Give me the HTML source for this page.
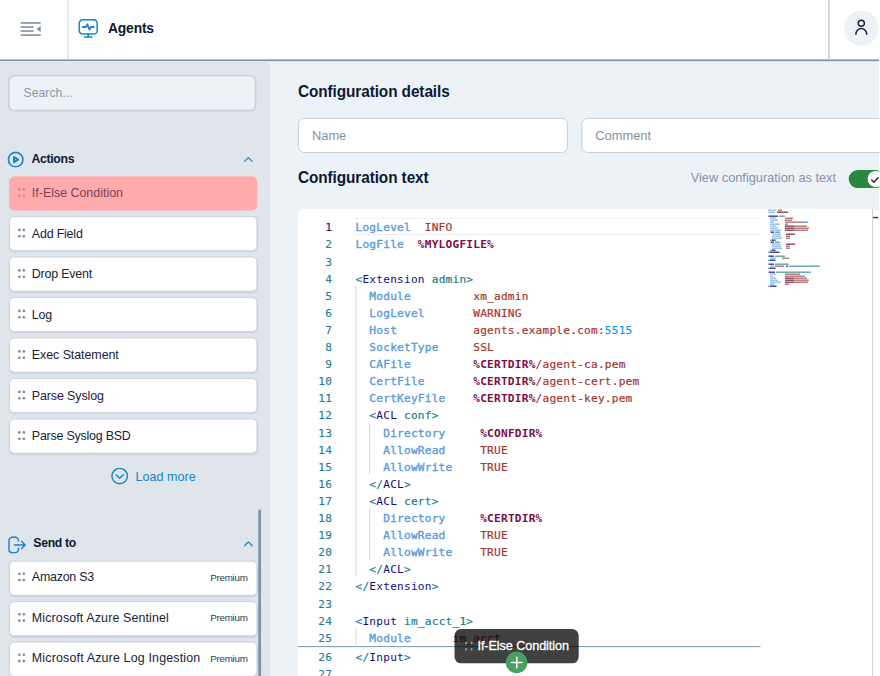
<!DOCTYPE html>
<html lang="en">
<head>
<meta charset="utf-8">
<title>Agents</title>
<style>
html,body{margin:0;padding:0;background:#fff;overflow:hidden;}
body{font-family:"Liberation Sans",Arial,sans-serif;font-size:14px;color:#0b1a33;}
#root{transform:scale(0.9);transform-origin:0 0;position:absolute;left:0;top:0;width:984px;height:752px;overflow:hidden;background:#fff;}
#mainbg{position:absolute;left:300px;top:68px;width:677px;height:690px;background:#edf2f7;}
.abs{position:absolute;}
/* header */
#hdr{position:absolute;left:0;top:0;width:977px;height:66px;background:#fff;border-bottom:2px solid #8193a7;}
#hdr .sep{position:absolute;top:0;width:1.6px;height:66px;background:#c9d1da;}
#title{position:absolute;left:120px;top:23px;font-weight:bold;font-size:15.4px;letter-spacing:-0.2px;color:#0b1a33;line-height:18px;}
#avatar{position:absolute;left:937.700px;top:12.100px;width:38px;height:38.500px;border-radius:50%;background:#edf2f7;}
/* sidebar */
#side{position:absolute;left:0;top:68px;width:300px;height:690px;background:#dfe5eb;}
#search{position:absolute;left:8.800px;top:15.100px;width:272.400px;height:37.100px;border:2px solid #cad2dc;border-radius:7px;background:#edf2f7;}
#search span{position:absolute;left:15.400px;top:11px;font-size:13.600px;color:#8a98a8;line-height:16px;}
.sec{position:absolute;left:0;width:300px;height:20px;}
.sec .t{position:absolute;left:35px;top:1px;font-weight:bold;font-size:13.6px;letter-spacing:-0.35px;line-height:18px;color:#0b1a33;}
.item{position:absolute;left:9.800px;width:274.300px;height:37px;border:1px solid #c9d1db;border-radius:6px;background:#fff;box-shadow:0 1px 1px rgba(120,135,155,.18);}
.item .l{position:absolute;left:24.600px;top:10.100px;font-size:13.800px;line-height:18px;color:#16233a;white-space:nowrap;}
.item .p{position:absolute;right:10px;top:11.500px;font-size:10.900px;letter-spacing:-0.3px;line-height:14px;color:#2b3a50;}
.item i{position:absolute;left:9.700px;top:12.900px;width:10px;height:10px;}
.item i b{position:absolute;width:3px;height:3px;border-radius:50%;background:#7f8c9e;}
.item.s2 .l{top:8.600px;}
.item.s2 .p{top:10px;}
.item.s2 i{top:12px;}
.item.drag{background:#ffabab;border-color:#ffabab;box-shadow:none;height:36px;}
.item.drag .l{top:9px;}
.item.drag i{top:11.700px;}
.item.drag .l{color:#7d4152;}
.item.drag i b{background:#c98a92;}
#ghost i b{position:absolute;width:2.800px;height:2.800px;border-radius:50%;background:#8f9bab;}
/* main */
.h{position:absolute;font-weight:bold;font-size:18.500px;letter-spacing:-0.1px;line-height:22px;transform:scaleX(.922);transform-origin:0 0;color:#0b1a33;white-space:nowrap;}
.inp{position:absolute;height:36.600px;border:1px solid #bfc9d5;border-radius:7px;background:#fff;}
.inp span{position:absolute;left:14.600px;top:10.600px;font-size:14.300px;line-height:16px;color:#8391a4;}
#ed{position:absolute;left:331px;top:232px;width:660px;height:530px;background:#fff;border-radius:7px 0 0 0;overflow:hidden;}
.ln{position:absolute;left:0;width:38px;text-align:right;font-family:"DejaVu Sans Mono","Liberation Mono",monospace;font-size:12.400px;letter-spacing:.235px;line-height:19px;height:19px;color:#237893;-webkit-text-stroke:.1px;}
.ln.cur{color:#0b216f;}
.cl{position:absolute;left:64px;font-family:"DejaVu Sans Mono","Liberation Mono",monospace;font-size:12.400px;letter-spacing:.235px;line-height:19px;height:19px;white-space:pre;color:#000;-webkit-text-stroke:.22px;}
.ck{color:#5b9bdc;-webkit-text-stroke:.4px;}
.cv{color:#a2382f;}
.cd{color:#7a0f45;font-weight:bold;-webkit-text-stroke:0;}
.ct{color:#10107a;-webkit-text-stroke:0;}
.ca{color:#1f7d86;}
.cb{color:#267f99;}
.cn{color:#0a98f7;}
</style>
</head>
<body>
<div id="root">
  <div id="mainbg"></div>
  <div id="hdr">
    <svg class="abs" style="left:22.300px;top:23px" width="26" height="20" viewBox="0 0 26 20"><g fill="#8393a7"><rect x="1" y="1.600" width="22.300" height="1.800"/><rect x="1" y="6.100" width="14.300" height="1.800"/><rect x="1" y="10.600" width="14.300" height="1.800"/><rect x="1" y="15.100" width="22.300" height="1.800"/><path d="M18.600 9.250 L23.300 5.600 L23.300 12.900 Z"/></g></svg>
    <div class="sep" style="left:74.500px"></div>
    <svg class="abs" style="left:85.600px;top:20px" width="24" height="24" viewBox="0 0 24 24" fill="none" stroke="#1586c8" stroke-width="1.7" stroke-linecap="round" stroke-linejoin="round"><rect x="2" y="2" width="20" height="15.800" rx="4"/><path d="M6 10h3.500l1.500-3 2.500 6 1.500-3h3" stroke-width="2"/><path d="M12 17.800v3.400M8 21.200h8"/></svg>
    <div id="title">Agents</div>
    <div class="sep" style="left:920px"></div>
    <div id="avatar"><svg class="abs" style="left:9px;top:7.300px" width="20" height="22" viewBox="0 0 20 22" fill="none" stroke="#14233b" stroke-width="1.7" stroke-linecap="round"><circle cx="10" cy="6.800" r="3.400"/><path d="M4 19a6 6.300 0 0 1 12 0"/></svg></div>
  </div>

  <div id="side">
    <div id="search"><span>Search...</span></div>

    <div class="sec" style="top:99px">
      <svg class="abs" style="left:8.200px;top:0.600px" width="18.800" height="18.800" viewBox="0 0 18 18" fill="none" stroke="#1586c8" stroke-width="1.750" stroke-linejoin="round"><circle cx="9" cy="9" r="7.700"/><path d="M7.300 6.300v5.400l4.300-2.700z" stroke-width="2.200"/></svg>
      <div class="t">Actions</div>
      <svg class="abs" style="left:270px;top:6px" width="12" height="8.500" viewBox="0 0 14 10" fill="none" stroke="#1586c8" stroke-width="1.6" stroke-linecap="round" stroke-linejoin="round"><path d="M2 7.5l5-5 5 5"/></svg>
    </div>

    <div class="item drag" style="top:128.300px"><i><b style="left:0;top:0"></b><b style="left:4.800px;top:0"></b><b style="left:0;top:7.200px"></b><b style="left:4.800px;top:7.200px"></b></i><span class="l" style="letter-spacing:0px">If-Else Condition</span></div>
    <div class="item" style="top:172.2px"><i><b style="left:0;top:0"></b><b style="left:4.800px;top:0"></b><b style="left:0;top:7.200px"></b><b style="left:4.800px;top:7.200px"></b></i><span class="l" style="letter-spacing:-0.21px">Add Field</span></div>
    <div class="item" style="top:217.2px"><i><b style="left:0;top:0"></b><b style="left:4.800px;top:0"></b><b style="left:0;top:7.200px"></b><b style="left:4.800px;top:7.200px"></b></i><span class="l" style="letter-spacing:-0.22px">Drop Event</span></div>
    <div class="item" style="top:262.2px"><i><b style="left:0;top:0"></b><b style="left:4.800px;top:0"></b><b style="left:0;top:7.200px"></b><b style="left:4.800px;top:7.200px"></b></i><span class="l" style="letter-spacing:-0.18px">Log</span></div>
    <div class="item" style="top:307.2px"><i><b style="left:0;top:0"></b><b style="left:4.800px;top:0"></b><b style="left:0;top:7.200px"></b><b style="left:4.800px;top:7.200px"></b></i><span class="l" style="letter-spacing:-0.06px">Exec Statement</span></div>
    <div class="item" style="top:352.2px"><i><b style="left:0;top:0"></b><b style="left:4.800px;top:0"></b><b style="left:0;top:7.200px"></b><b style="left:4.800px;top:7.200px"></b></i><span class="l" style="letter-spacing:-0.115px">Parse Syslog</span></div>
    <div class="item" style="top:397.2px"><i><b style="left:0;top:0"></b><b style="left:4.800px;top:0"></b><b style="left:0;top:7.200px"></b><b style="left:4.800px;top:7.200px"></b></i><span class="l" style="letter-spacing:-0.24px">Parse Syslog BSD</span></div>

    <div class="abs" style="left:122.500px;top:451.200px;width:120px;height:20px">
      <svg class="abs" style="left:0;top:0" width="20" height="20" viewBox="0 0 20 20" fill="none" stroke="#1586c8" stroke-width="1.600" stroke-linecap="round" stroke-linejoin="round"><circle cx="10" cy="10" r="8.600"/><path d="M6 8.5l4 4 4-4"/></svg>
      <span class="abs" style="left:28px;top:1px;font-size:14px;line-height:18px;color:#1586c8;white-space:nowrap">Load more</span>
    </div>

    <div class="sec" style="top:525.500px">
      <svg class="abs" style="left:8px;top:0" width="22" height="22" viewBox="0 0 22 22" fill="none" stroke="#1586c8" stroke-width="1.6" stroke-linecap="round" stroke-linejoin="round"><path d="M9 3H5.5A3.5 3.5 0 0 0 2 6.500V16.500A3.500 3.500 0 0 0 5.500 20H9A3.500 3.500 0 0 0 12.500 16.500V15"/><path d="M12.500 7V6.500A3.500 3.500 0 0 0 9 3"/><path d="M8 11.500h12M16 7.500l4 4-4 4"/></svg>
      <div class="t" style="left:37px">Send to</div>
      <svg class="abs" style="left:270px;top:6px" width="12" height="8.500" viewBox="0 0 14 10" fill="none" stroke="#1586c8" stroke-width="1.6" stroke-linecap="round" stroke-linejoin="round"><path d="M2 7.500l5-5 5 5"/></svg>
    </div>
    <div class="item s2" style="top:554.7px"><i><b style="left:0;top:0"></b><b style="left:4.800px;top:0"></b><b style="left:0;top:7.200px"></b><b style="left:4.800px;top:7.200px"></b></i><span class="l" style="letter-spacing:-0.25px">Amazon S3</span><span class="p">Premium</span></div>
    <div class="item s2" style="top:599.7px"><i><b style="left:0;top:0"></b><b style="left:4.800px;top:0"></b><b style="left:0;top:7.200px"></b><b style="left:4.800px;top:7.200px"></b></i><span class="l" style="letter-spacing:0.15px;top:9.100px">Microsoft Azure Sentinel</span><span class="p">Premium</span></div>
    <div class="item s2" style="top:644.7px"><i><b style="left:0;top:0"></b><b style="left:4.800px;top:0"></b><b style="left:0;top:7.200px"></b><b style="left:4.800px;top:7.200px"></b></i><span class="l" style="letter-spacing:0.19px">Microsoft Azure Log Ingestion</span><span class="p">Premium</span></div>
    <div class="abs" style="left:287.300px;top:497.500px;width:3.200px;height:200px;background:#7f91a6;border-radius:1.600px"></div>
  </div>

  <div class="h" style="left:331px;top:91px">Configuration details</div>
  <div class="inp" style="left:331px;top:131.300px;width:298px"><span>Name</span></div>
  <div class="inp" style="left:645.800px;top:131.300px;width:340px"><span>Comment</span></div>
  <div class="h" style="left:331px;top:185.800px">Configuration text</div>
  <div class="abs" style="left:767.500px;top:188px;font-size:14.200px;line-height:18px;color:#8593a6;white-space:nowrap">View configuration as text</div>
  <div class="abs" style="left:943px;top:189px;width:40px;height:20px;border-radius:10px;background:#2a8740"></div>
  <div class="abs" style="left:964px;top:190px;width:18px;height:18px;border-radius:50%;background:#fff"><svg class="abs" style="left:3.200px;top:5.500px" width="10" height="8" viewBox="0 0 10 8" fill="none" stroke="#14233b" stroke-width="1.5" stroke-linecap="round" stroke-linejoin="round"><path d="M1.500 4l2.500 2.500 4.500-5"/></svg></div>

  <div id="ed">
    <div id="code">
<div class="abs" style="left:64px;top:10px;width:449.5px;height:17px;border:1px solid #eaeaea;border-right:0"></div>
<div class="abs" style="left:64.0px;top:86px;width:1px;height:323px;background:#d3d3d3"></div>
<div class="abs" style="left:79.4px;top:238px;width:1px;height:57px;background:#d3d3d3"></div>
<div class="abs" style="left:79.4px;top:333px;width:1px;height:57px;background:#d3d3d3"></div>
<div class="abs" style="left:64.0px;top:466px;width:1px;height:19px;background:#d3d3d3"></div>
<div class="ln cur" style="top:10.9px">1</div>
<div class="cl" style="top:10.9px"><span class="ck">LogLevel</span>  <span class="cv">INFO</span></div>
<div class="ln" style="top:29.9px">2</div>
<div class="cl" style="top:29.9px"><span class="ck">LogFile</span>  <span class="cd">%MYLOGFILE%</span></div>
<div class="ln" style="top:48.9px">3</div>
<div class="ln" style="top:67.9px">4</div>
<div class="cl" style="top:67.9px"><span class="cb">&lt;</span><span class="ct">Extension</span> <span class="ca">admin</span><span class="cb">&gt;</span></div>
<div class="ln" style="top:86.9px">5</div>
<div class="cl" style="top:86.9px">  <span class="ck">Module</span>         <span class="cv">xm_admin</span></div>
<div class="ln" style="top:105.9px">6</div>
<div class="cl" style="top:105.9px">  <span class="ck">LogLevel</span>       <span class="cv">WARNING</span></div>
<div class="ln" style="top:124.9px">7</div>
<div class="cl" style="top:124.9px">  <span class="ck">Host</span>           <span class="cv">agents.example.com:</span><span class="cn">5515</span></div>
<div class="ln" style="top:143.9px">8</div>
<div class="cl" style="top:143.9px">  <span class="ck">SocketType</span>     <span class="cv">SSL</span></div>
<div class="ln" style="top:162.9px">9</div>
<div class="cl" style="top:162.9px">  <span class="ck">CAFile</span>         <span class="cd">%CERTDIR%</span><span class="cv">/agent-ca.pem</span></div>
<div class="ln" style="top:181.9px">10</div>
<div class="cl" style="top:181.9px">  <span class="ck">CertFile</span>       <span class="cd">%CERTDIR%</span><span class="cv">/agent-cert.pem</span></div>
<div class="ln" style="top:200.9px">11</div>
<div class="cl" style="top:200.9px">  <span class="ck">CertKeyFile</span>    <span class="cd">%CERTDIR%</span><span class="cv">/agent-key.pem</span></div>
<div class="ln" style="top:219.9px">12</div>
<div class="cl" style="top:219.9px">  <span class="cb">&lt;</span><span class="ct">ACL</span> <span class="ca">conf</span><span class="cb">&gt;</span></div>
<div class="ln" style="top:238.9px">13</div>
<div class="cl" style="top:238.9px">    <span class="ck">Directory</span>     <span class="cd">%CONFDIR%</span></div>
<div class="ln" style="top:257.9px">14</div>
<div class="cl" style="top:257.9px">    <span class="ck">AllowRead</span>     <span class="cv">TRUE</span></div>
<div class="ln" style="top:276.9px">15</div>
<div class="cl" style="top:276.9px">    <span class="ck">AllowWrite</span>    <span class="cv">TRUE</span></div>
<div class="ln" style="top:295.9px">16</div>
<div class="cl" style="top:295.9px">  <span class="cb">&lt;/</span><span class="ct">ACL</span><span class="cb">&gt;</span></div>
<div class="ln" style="top:314.9px">17</div>
<div class="cl" style="top:314.9px">  <span class="cb">&lt;</span><span class="ct">ACL</span> <span class="ca">cert</span><span class="cb">&gt;</span></div>
<div class="ln" style="top:333.9px">18</div>
<div class="cl" style="top:333.9px">    <span class="ck">Directory</span>     <span class="cd">%CERTDIR%</span></div>
<div class="ln" style="top:352.9px">19</div>
<div class="cl" style="top:352.9px">    <span class="ck">AllowRead</span>     <span class="cv">TRUE</span></div>
<div class="ln" style="top:371.9px">20</div>
<div class="cl" style="top:371.9px">    <span class="ck">AllowWrite</span>    <span class="cv">TRUE</span></div>
<div class="ln" style="top:390.9px">21</div>
<div class="cl" style="top:390.9px">  <span class="cb">&lt;/</span><span class="ct">ACL</span><span class="cb">&gt;</span></div>
<div class="ln" style="top:409.9px">22</div>
<div class="cl" style="top:409.9px"><span class="cb">&lt;/</span><span class="ct">Extension</span><span class="cb">&gt;</span></div>
<div class="ln" style="top:428.9px">23</div>
<div class="ln" style="top:447.9px">24</div>
<div class="cl" style="top:447.9px"><span class="cb">&lt;</span><span class="ct">Input</span> <span class="ca">im_acct_1</span><span class="cb">&gt;</span></div>
<div class="ln" style="top:466.9px">25</div>
<div class="cl" style="top:466.9px">  <span class="ck">Module</span>      <span class="cv">im_acct</span></div>
<div class="ln" style="top:487.9px">26</div>
<div class="cl" style="top:487.9px"><span class="cb">&lt;/</span><span class="ct">Input</span><span class="cb">&gt;</span></div>
<div class="ln" style="top:506.9px">27</div>
<div class="ln" style="top:525.9px">28</div>
<div class="cl" style="top:525.9px"><span class="cb">&lt;</span><span class="ct">Route</span> <span class="ca">default_route</span><span class="cb">&gt;</span></div>
</div><!--/code-->
  </div>
  <div class="abs" style="left:331px;top:717.500px;width:513.500px;height:1.400px;background:#7089a6"></div>
  <div id="ghost" class="abs" style="left:504.800px;top:699.200px;width:138.400px;height:37.800px;border-radius:7.200px;background:rgba(0,0,0,.75)">
    <i class="abs" style="left:11.900px;top:14.300px;width:10px;height:10px"><b style="left:0;top:0"></b><b style="left:6px;top:0"></b><b style="left:0;top:6.500px"></b><b style="left:6px;top:6.500px"></b></i>
    <span class="abs" style="left:25.700px;top:8.900px;font-size:14px;letter-spacing:-.06px;line-height:18px;color:#fff;white-space:nowrap;-webkit-text-stroke:.35px #fff">If-Else Condition</span>
  </div>
  <div class="abs" style="left:561.500px;top:723.600px;width:24.400px;height:24.400px;border-radius:50%;background:#4b9f60"><svg class="abs" style="left:0;top:0" width="24.400" height="24.400" viewBox="0 0 24 24" stroke="#fff" stroke-width="1.700" stroke-linecap="round"><path d="M12 6.300v11.400M6.300 12h11.400"/></svg></div>
  <div class="abs" style="left:976.700px;top:0;width:6px;height:760px;background:#fff;z-index:50"></div>
</div>
<div id="ov">
<!--mm--><svg class="abs" style="left:0;top:0" width="880" height="676" viewBox="0 0 880 676"><rect x="768" y="209.5" width="8" height="1.4" fill="#5b94d6" opacity="0.62"/><rect x="778" y="209.5" width="4" height="1.4" fill="#8a3434" opacity="0.68"/><rect x="768" y="211.5" width="7" height="1.4" fill="#5b94d6" opacity="0.62"/><rect x="777" y="211.5" width="11" height="1.4" fill="#6e1036" opacity="0.8"/><rect x="768" y="215.5" width="1" height="1.4" fill="#2a6f9c" opacity="0.6"/><rect x="769" y="215.5" width="9" height="1.4" fill="#0a0a7a" opacity="0.8"/><rect x="779" y="215.5" width="5" height="1.4" fill="#1f7d86" opacity="0.7"/><rect x="784" y="215.5" width="1" height="1.4" fill="#2a6f9c" opacity="0.6"/><rect x="770" y="217.5" width="6" height="1.4" fill="#5b94d6" opacity="0.62"/><rect x="785" y="217.5" width="8" height="1.4" fill="#8a3434" opacity="0.68"/><rect x="770" y="219.5" width="8" height="1.4" fill="#5b94d6" opacity="0.62"/><rect x="785" y="219.5" width="7" height="1.4" fill="#8a3434" opacity="0.68"/><rect x="770" y="221.5" width="4" height="1.4" fill="#5b94d6" opacity="0.62"/><rect x="785" y="221.5" width="19" height="1.4" fill="#8a3434" opacity="0.68"/><rect x="804" y="221.5" width="4" height="1.4" fill="#0a98f7" opacity="0.8"/><rect x="770" y="223.5" width="10" height="1.4" fill="#5b94d6" opacity="0.62"/><rect x="785" y="223.5" width="3" height="1.4" fill="#8a3434" opacity="0.68"/><rect x="770" y="225.5" width="6" height="1.4" fill="#5b94d6" opacity="0.62"/><rect x="785" y="225.5" width="9" height="1.4" fill="#6e1036" opacity="0.8"/><rect x="794" y="225.5" width="13" height="1.4" fill="#8a3434" opacity="0.68"/><rect x="770" y="227.5" width="8" height="1.4" fill="#5b94d6" opacity="0.62"/><rect x="785" y="227.5" width="9" height="1.4" fill="#6e1036" opacity="0.8"/><rect x="794" y="227.5" width="15" height="1.4" fill="#8a3434" opacity="0.68"/><rect x="770" y="229.5" width="11" height="1.4" fill="#5b94d6" opacity="0.62"/><rect x="785" y="229.5" width="9" height="1.4" fill="#6e1036" opacity="0.8"/><rect x="794" y="229.5" width="14" height="1.4" fill="#8a3434" opacity="0.68"/><rect x="770" y="231.5" width="1" height="1.4" fill="#2a6f9c" opacity="0.6"/><rect x="771" y="231.5" width="3" height="1.4" fill="#0a0a7a" opacity="0.8"/><rect x="775" y="231.5" width="4" height="1.4" fill="#1f7d86" opacity="0.7"/><rect x="779" y="231.5" width="1" height="1.4" fill="#2a6f9c" opacity="0.6"/><rect x="772" y="233.5" width="9" height="1.4" fill="#5b94d6" opacity="0.62"/><rect x="786" y="233.5" width="9" height="1.4" fill="#6e1036" opacity="0.8"/><rect x="772" y="235.5" width="9" height="1.4" fill="#5b94d6" opacity="0.62"/><rect x="786" y="235.5" width="4" height="1.4" fill="#8a3434" opacity="0.68"/><rect x="772" y="237.5" width="10" height="1.4" fill="#5b94d6" opacity="0.62"/><rect x="786" y="237.5" width="4" height="1.4" fill="#8a3434" opacity="0.68"/><rect x="770" y="239.5" width="2" height="1.4" fill="#2a6f9c" opacity="0.6"/><rect x="772" y="239.5" width="3" height="1.4" fill="#0a0a7a" opacity="0.8"/><rect x="775" y="239.5" width="1" height="1.4" fill="#2a6f9c" opacity="0.6"/><rect x="770" y="241.5" width="1" height="1.4" fill="#2a6f9c" opacity="0.6"/><rect x="771" y="241.5" width="3" height="1.4" fill="#0a0a7a" opacity="0.8"/><rect x="775" y="241.5" width="4" height="1.4" fill="#1f7d86" opacity="0.7"/><rect x="779" y="241.5" width="1" height="1.4" fill="#2a6f9c" opacity="0.6"/><rect x="772" y="243.5" width="9" height="1.4" fill="#5b94d6" opacity="0.62"/><rect x="786" y="243.5" width="9" height="1.4" fill="#6e1036" opacity="0.8"/><rect x="772" y="245.5" width="9" height="1.4" fill="#5b94d6" opacity="0.62"/><rect x="786" y="245.5" width="4" height="1.4" fill="#8a3434" opacity="0.68"/><rect x="772" y="247.5" width="10" height="1.4" fill="#5b94d6" opacity="0.62"/><rect x="786" y="247.5" width="4" height="1.4" fill="#8a3434" opacity="0.68"/><rect x="770" y="249.5" width="2" height="1.4" fill="#2a6f9c" opacity="0.6"/><rect x="772" y="249.5" width="3" height="1.4" fill="#0a0a7a" opacity="0.8"/><rect x="775" y="249.5" width="1" height="1.4" fill="#2a6f9c" opacity="0.6"/><rect x="768" y="251.5" width="2" height="1.4" fill="#2a6f9c" opacity="0.6"/><rect x="770" y="251.5" width="9" height="1.4" fill="#0a0a7a" opacity="0.8"/><rect x="779" y="251.5" width="1" height="1.4" fill="#2a6f9c" opacity="0.6"/><rect x="768" y="255.5" width="1" height="1.4" fill="#2a6f9c" opacity="0.6"/><rect x="769" y="255.5" width="5" height="1.4" fill="#0a0a7a" opacity="0.8"/><rect x="775" y="255.5" width="9" height="1.4" fill="#1f7d86" opacity="0.7"/><rect x="784" y="255.5" width="1" height="1.4" fill="#2a6f9c" opacity="0.6"/><rect x="770" y="257.5" width="6" height="1.4" fill="#5b94d6" opacity="0.62"/><rect x="782" y="257.5" width="7" height="1.4" fill="#8a3434" opacity="0.68"/><rect x="768" y="259.5" width="2" height="1.4" fill="#2a6f9c" opacity="0.6"/><rect x="770" y="259.5" width="5" height="1.4" fill="#0a0a7a" opacity="0.8"/><rect x="775" y="259.5" width="1" height="1.4" fill="#2a6f9c" opacity="0.6"/><rect x="768" y="263.5" width="1" height="1.4" fill="#2a6f9c" opacity="0.6"/><rect x="769" y="263.5" width="5" height="1.4" fill="#0a0a7a" opacity="0.8"/><rect x="775" y="263.5" width="13" height="1.4" fill="#1f7d86" opacity="0.7"/><rect x="788" y="263.5" width="1" height="1.4" fill="#2a6f9c" opacity="0.6"/><rect x="770" y="265.5" width="4" height="1.4" fill="#5b94d6" opacity="0.62"/><rect x="775" y="265.5" width="8" height="1.4" fill="#8a3434" opacity="0.68"/><rect x="783" y="265.5" width="1" height="1.4" fill="#0a98f7" opacity="0.8"/><rect x="786" y="265.5" width="2" height="1.4" fill="#0a0a7a" opacity="0.8"/><rect x="789" y="265.5" width="30" height="1.4" fill="#1f7d86" opacity="0.7"/><rect x="819" y="265.5" width="1" height="1.4" fill="#0a98f7" opacity="0.8"/><rect x="768" y="267.5" width="2" height="1.4" fill="#2a6f9c" opacity="0.6"/><rect x="770" y="267.5" width="5" height="1.4" fill="#0a0a7a" opacity="0.8"/><rect x="775" y="267.5" width="1" height="1.4" fill="#2a6f9c" opacity="0.6"/><rect x="768" y="271.5" width="1" height="1.4" fill="#2a6f9c" opacity="0.6"/><rect x="769" y="271.5" width="6" height="1.4" fill="#0a0a7a" opacity="0.8"/><rect x="776" y="271.5" width="34" height="1.4" fill="#1f7d86" opacity="0.7"/><rect x="810" y="271.5" width="1" height="1.4" fill="#2a6f9c" opacity="0.6"/><rect x="770" y="273.5" width="6" height="1.4" fill="#5b94d6" opacity="0.62"/><rect x="785" y="273.5" width="15" height="1.4" fill="#8a3434" opacity="0.68"/><rect x="770" y="275.5" width="3" height="1.4" fill="#5b94d6" opacity="0.62"/><rect x="785" y="275.5" width="16" height="1.4" fill="#8a3434" opacity="0.68"/><rect x="801" y="275.5" width="4" height="1.4" fill="#0a98f7" opacity="0.8"/><rect x="770" y="277.5" width="6" height="1.4" fill="#5b94d6" opacity="0.62"/><rect x="785" y="277.5" width="9" height="1.4" fill="#6e1036" opacity="0.8"/><rect x="794" y="277.5" width="13" height="1.4" fill="#8a3434" opacity="0.68"/><rect x="770" y="279.5" width="8" height="1.4" fill="#5b94d6" opacity="0.62"/><rect x="785" y="279.5" width="9" height="1.4" fill="#6e1036" opacity="0.8"/><rect x="794" y="279.5" width="15" height="1.4" fill="#8a3434" opacity="0.68"/><rect x="770" y="281.5" width="11" height="1.4" fill="#5b94d6" opacity="0.62"/><rect x="785" y="281.5" width="9" height="1.4" fill="#6e1036" opacity="0.8"/><rect x="794" y="281.5" width="14" height="1.4" fill="#8a3434" opacity="0.68"/><rect x="770" y="283.5" width="5" height="1.4" fill="#5b94d6" opacity="0.62"/><rect x="785" y="283.5" width="4" height="1.4" fill="#8a3434" opacity="0.68"/><rect x="768" y="285.5" width="2" height="1.4" fill="#2a6f9c" opacity="0.6"/><rect x="770" y="285.5" width="6" height="1.4" fill="#0a0a7a" opacity="0.8"/><rect x="776" y="285.5" width="1" height="1.4" fill="#2a6f9c" opacity="0.6"/><rect x="872" y="209" width="1" height="467" fill="#d4d4d4"/><rect x="873" y="209" width="6" height="0.6" fill="#e4e4e4"/><rect x="873" y="216.8" width="5.3" height="1.5" fill="#424242"/></svg><!--/mm-->

</div>
</body>
</html>
